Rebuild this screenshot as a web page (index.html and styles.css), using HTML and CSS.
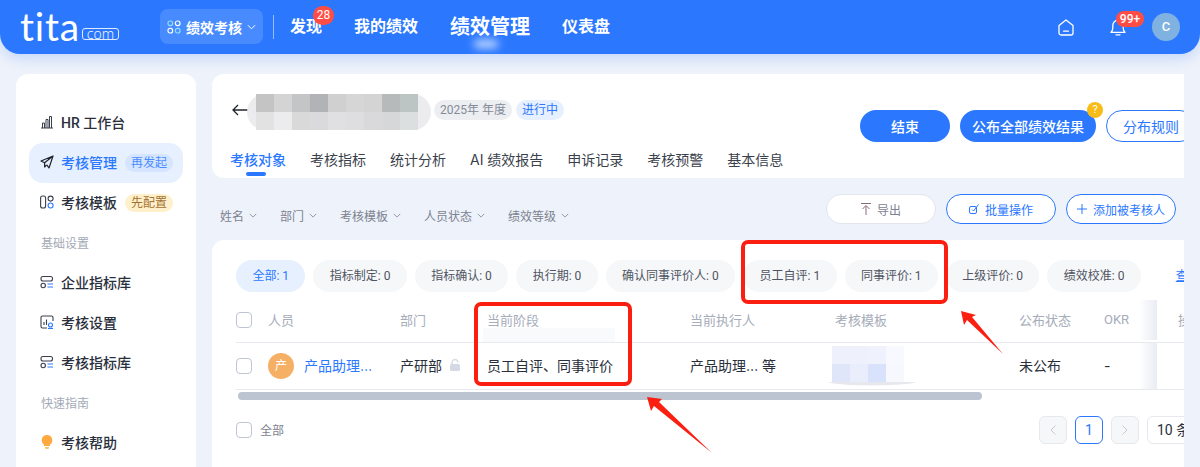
FILE: index.html
```html
<!DOCTYPE html>
<html lang="zh-CN">
<head>
<meta charset="utf-8">
<title>绩效考核</title>
<link rel="stylesheet" href="styles.css">
</head>
<body>
<div class="page">
  <header class="topbar">
    <div class="logo"><span class="logo-word">tita</span><span class="logo-com">com</span></div>
    <div class="app-switch">
      <svg class="app-icon" viewBox="0 0 14 14" width="14" height="14" fill="none" stroke-width="1.2"><rect x="1" y="1" width="4.6" height="4.6" rx="2" stroke="#8fe0ff"/><rect x="8.4" y="1" width="4.6" height="4.6" rx="2" stroke="#fff"/><rect x="1" y="8.4" width="4.6" height="4.6" rx="2" stroke="#fff"/><rect x="8.4" y="8.4" width="4.6" height="4.6" rx="2" stroke="#8fe0ff"/></svg>
      <span>绩效考核</span>
      <svg viewBox="0 0 10 6" width="9" height="6" fill="none" stroke="#fff" stroke-width="1.1"><path d="M1 1l4 4 4-4"/></svg>
    </div>
    <div class="top-divider"></div>
    <nav class="topnav">
      <a class="nav-item nav-find">发现<span class="badge-28">28</span></a>
      <a class="nav-item">我的绩效</a>
      <a class="nav-item nav-current">绩效管理</a>
      <a class="nav-item">仪表盘</a>
    </nav>
    <div class="top-right">
      <svg viewBox="0 0 16 17" width="16" height="17" fill="none" stroke="#fff" stroke-width="1.3"><path d="M1 6.6L8 1l7 5.6v7.4a2 2 0 0 1-2 2H3a2 2 0 0 1-2-2z" stroke-linejoin="round"/><path d="M5.6 12.2h4.8" stroke-linecap="round"/></svg>
      <div class="bell">
        <svg viewBox="0 0 16 18" width="16" height="18" fill="none" stroke="#fff" stroke-width="1.3"><path d="M1 14.4c1.4-1 1.8-2.4 1.8-4.6V7.4a5.2 5.2 0 0 1 10.4 0v2.4c0 2.2.4 3.600 1.800 4.600z" stroke-linejoin="round"/><path d="M6 16.800h4" stroke-linecap="round"/></svg>
        <span class="badge-99">99+</span>
      </div>
      <div class="user-avatar">C</div>
    </div>
  </header>

  <div class="content">
    <aside class="sidebar">
      <a class="side-item">
        <svg class="side-icon" viewBox="0 0 14 14" fill="none" stroke="#3a3f4c" stroke-width="1"><path d="M1 13h12M2.500 13V8h2v5M6 13V4.500h2V13M9.500 13V1.500h2V13"/></svg>
        <span>HR 工作台</span>
      </a>
      <a class="side-item side-active">
        <svg class="side-icon" viewBox="0 0 14 14" fill="none" stroke="#20242e" stroke-width="1.200" stroke-linejoin="round"><path d="M13 1L1 6l3.600 1.800L13 1 9 13 6.800 9.800"/><path d="M4.600 7.800v4.200l2-2.200"/></svg>
        <span>考核管理</span><em class="tag tag-blue">再发起</em>
      </a>
      <a class="side-item">
        <svg class="side-icon" viewBox="0 0 14 14" fill="none" stroke-width="1.100"><rect x=".6" y="1" width="5" height="12" rx="2" stroke="#3a3f4c"/><circle cx="10.600" cy="3.600" r="2.500" stroke="#3a3f4c"/><circle cx="10.600" cy="10.500" r="2.500" stroke="#2b78ff"/></svg>
        <span>考核模板</span><em class="tag tag-amber">先配置</em>
      </a>
      <div class="side-label">基础设置</div>
      <a class="side-item">
        <svg class="side-icon" viewBox="0 0 14 14" fill="none" stroke-width="1.100"><rect x="1" y="1.500" width="11.500" height="4.500" rx="2" stroke="#3a3f4c"/><circle cx="3.200" cy="10.500" r="2.200" stroke="#3a3f4c"/><path d="M7.500 9h5.500M7.500 12h5.500" stroke="#2b78ff"/></svg>
        <span>企业指标库</span>
      </a>
      <a class="side-item">
        <svg class="side-icon" viewBox="0 0 14 14" fill="none" stroke-width="1.100"><path d="M7 13H2.500a1.500 1.500 0 0 1-1.500-1.500v-9A1.500 1.500 0 0 1 2.500 1h9A1.500 1.500 0 0 1 13 2.500V6" stroke="#3a3f4c"/><path d="M4 10V7M6.500 10V4.500" stroke="#3a3f4c"/><circle cx="10.500" cy="10" r="2" stroke="#2b78ff"/><path d="M8 13.500h5" stroke="#2b78ff"/></svg>
        <span>考核设置</span>
      </a>
      <a class="side-item">
        <svg class="side-icon" viewBox="0 0 14 14" fill="none" stroke-width="1.100"><rect x="1" y="1.500" width="11.500" height="4.500" rx="2" stroke="#3a3f4c"/><circle cx="3.200" cy="10.500" r="2.200" stroke="#3a3f4c"/><path d="M7.500 9h5.500M7.500 12h5.500" stroke="#2b78ff"/></svg>
        <span>考核指标库</span>
      </a>
      <div class="side-label">快速指南</div>
      <a class="side-item">
        <svg class="side-icon" viewBox="0 0 14 14"><path d="M7 0a5.200 5.200 0 0 0-3 9.500V11h6V9.500A5.200 5.200 0 0 0 7 0z" fill="#ffa940"/><path d="M4.800 12h4.400l-.8 2H5.600z" fill="#ffc069"/></svg>
        <span>考核帮助</span>
      </a>
    </aside>

    <main class="main">
      <section class="head-card">
        <div class="head-row">
          <svg class="back" viewBox="0 0 16 12" width="16" height="12" fill="none" stroke="#20242e" stroke-width="1.300"><path d="M16 6H1M6 1L1 6l5 5"/></svg>
          <svg class="title-mosaic" viewBox="0 0 184 36" width="184" height="36">
            <rect width="184" height="36" rx="18" fill="#ececef"/>
            <rect x="9" width="18" height="18" fill="#c4c4c4"/><rect x="27" width="18" height="18" fill="#d4d4d4"/><rect x="45" width="18" height="18" fill="#c4c5c7"/><rect x="63" width="18" height="18" fill="#b2b3b6"/><rect x="81" width="18" height="18" fill="#d0d0d0"/><rect x="99" width="18" height="18" fill="#d6d6d6"/><rect x="117" width="18" height="18" fill="#d4d4d4"/><rect x="135" width="18" height="18" fill="#b7baba"/><rect x="153" width="18" height="18" fill="#bcc4c4"/>
            <rect x="9" y="18" width="18" height="18" fill="#e2e2e2"/><rect x="27" y="18" width="18" height="18" fill="#ececee"/><rect x="45" y="18" width="18" height="18" fill="#d9d9d9"/><rect x="63" y="18" width="18" height="18" fill="#dadadc"/><rect x="81" y="18" width="18" height="18" fill="#e0e0e2"/><rect x="99" y="18" width="18" height="18" fill="#dedee0"/><rect x="117" y="18" width="18" height="18" fill="#d9d9db"/><rect x="135" y="18" width="18" height="18" fill="#d6d7d9"/><rect x="153" y="18" width="18" height="18" fill="#dcdfdf"/>
          </svg>
          <span class="chip chip-grey">2025年 年度</span>
          <span class="chip chip-blue">进行中</span>
          <div class="head-actions">
            <button class="btn-solid btn-end">结束</button>
            <button class="btn-solid btn-publish">公布全部绩效结果<span class="help-dot">?</span></button>
            <button class="btn-ghost btn-rule">分布规则</button>
          </div>
        </div>
        <nav class="tabs">
          <a class="tab tab-active">考核对象</a>
          <a class="tab">考核指标</a>
          <a class="tab">统计分析</a>
          <a class="tab">AI 绩效报告</a>
          <a class="tab">申诉记录</a>
          <a class="tab">考核预警</a>
          <a class="tab">基本信息</a>
        </nav>
      </section>

      <section class="filter-bar">
        <div class="filters">
          <span class="filter">姓名<svg viewBox="0 0 10 6" width="8" height="5" fill="none" stroke="#7d8391"><path d="M1 1l4 4 4-4"/></svg></span>
          <span class="filter">部门<svg viewBox="0 0 10 6" width="8" height="5" fill="none" stroke="#7d8391"><path d="M1 1l4 4 4-4"/></svg></span>
          <span class="filter">考核模板<svg viewBox="0 0 10 6" width="8" height="5" fill="none" stroke="#7d8391"><path d="M1 1l4 4 4-4"/></svg></span>
          <span class="filter">人员状态<svg viewBox="0 0 10 6" width="8" height="5" fill="none" stroke="#7d8391"><path d="M1 1l4 4 4-4"/></svg></span>
          <span class="filter">绩效等级<svg viewBox="0 0 10 6" width="8" height="5" fill="none" stroke="#7d8391"><path d="M1 1l4 4 4-4"/></svg></span>
        </div>
        <div class="filter-actions">
          <button class="btn-line btn-export"><svg viewBox="0 0 10 12" width="10" height="12" fill="none" stroke="#8a6a78"><path d="M0 .5h10M5 12V3M1.500 6L5 2.500 8.500 6"/></svg>导出</button>
          <button class="btn-line btn-blue"><svg viewBox="0 0 10 10" width="10" height="10" fill="none" stroke="#2b78ff"><rect x=".5" y="2.500" width="7" height="7" rx="1.500"/><path d="M3 5.500l1.500 1.500L9.500.5"/></svg>批量操作</button>
          <button class="btn-line btn-blue"><svg viewBox="0 0 10 10" width="10" height="10" fill="none" stroke="#2b78ff"><path d="M5 0v10M0 5h10"/></svg>添加被考核人</button>
        </div>
      </section>

      <section class="table-card">
        <div class="pills">
          <span class="pill pill-active">全部: 1</span>
          <span class="pill">指标制定: 0</span>
          <span class="pill">指标确认: 0</span>
          <span class="pill">执行期: 0</span>
          <span class="pill">确认同事评价人: 0</span>
          <span class="pill">员工自评: 1</span>
          <span class="pill">同事评价: 1</span>
          <span class="pill">上级评价: 0</span>
          <span class="pill">绩效校准: 0</span>
          <a class="pill-link">查看</a>
        </div>
        <div class="grid-row grid-head">
          <span class="check"></span>
          <span>人员</span><span>部门</span><span>当前阶段</span><span>当前执行人</span><span>考核模板</span><span>公布状态</span><span>OKR</span>
          <span class="fixed-col">操作</span>
        </div>
        <div class="grid-row grid-body">
          <span class="check"></span>
          <span class="person"><i class="avatar">产</i><a class="person-name">产品助理…</a></span>
          <span class="dept">产研部<svg viewBox="0 0 12 12" width="12" height="12"><path d="M3 5.500V3.500a3 3 0 0 1 6 0" fill="none" stroke="#d4d9e4" stroke-width="1.300"/><rect x="1" y="5" width="10" height="7" rx="1.500" fill="#d4d9e4"/></svg></span>
          <span>员工自评、同事评价</span>
          <span>产品助理… 等</span>
          <span class="tmpl-cell"><svg viewBox="0 0 90 46" width="90" height="46">
            <rect x="4" y="3" width="72" height="36" fill="#f8f9fe"/>
            <rect x="4" y="3" width="18" height="18" fill="#eef1fc"/><rect x="22" y="3" width="18" height="18" fill="#eef1fc"/><rect x="40" y="3" width="18" height="18" fill="#eff2fd"/><rect x="58" y="3" width="18" height="18" fill="#f7f9fe"/>
            <rect x="4" y="21" width="18" height="18" fill="#e0e6fa"/><rect x="22" y="21" width="18" height="18" fill="#eaeefc"/><rect x="40" y="21" width="18" height="18" fill="#d8e2fa"/><rect x="58" y="21" width="18" height="18" fill="#f6f8fe"/>
            <path d="M0 39h88c-6 4-78 5-88 0z" fill="#e6e8ee"/>
          </svg></span>
          <span>未公布</span>
          <span>-</span>
          <span class="fixed-col"></span>
        </div>
        <div class="scrollbar"></div>
        <div class="table-foot">
          <span class="check"></span>
          <span class="foot-all">全部</span>
          <div class="pager">
            <span class="page-btn page-off"><svg viewBox="0 0 6 10" width="6" height="10" fill="none" stroke="#c5cad4"><path d="M5.500.5L1 5l4.500 4.500"/></svg></span>
            <span class="page-btn page-on">1</span>
            <span class="page-btn page-off"><svg viewBox="0 0 6 10" width="6" height="10" fill="none" stroke="#c5cad4"><path d="M.5.500L5 5 .5 9.500"/></svg></span>
            <span class="page-size">10 条/页</span>
          </div>
        </div>
      </section>
    </main>
  </div>

  <svg class="marks" viewBox="0 0 1200 467" width="1200" height="467" fill="none">
    <rect x="483" y="328" width="132" height="14" fill="#f4f5f8" opacity=".5"/>
    <rect x="476" y="304" width="154" height="80" rx="5" stroke="#fb1f12" stroke-width="4"/>
    <rect x="743" y="242" width="203" height="60" rx="5" stroke="#fb1f12" stroke-width="4"/>
    <path d="M961 311L976 315L972 317L1003 354L967 320L964 325Z" fill="#fb1f12"/>
    <path d="M647 397L662 399L659 402L712 453L654 406L651 411Z" fill="#fb1f12"/>
  </svg>
</div>
</body>
</html>
```
FILE: styles.css
```css
* { box-sizing: border-box; }
html, body { margin: 0; height: 100%; }
body {
  font-family: Roboto, "Noto Sans CJK SC", sans-serif;
  color: #2a2f3c;
  background: #eef2fa;
  overflow: hidden;
}
a { text-decoration: none; color: inherit; }
em, i { font-style: normal; }
button { font-family: inherit; cursor: pointer; }
svg { flex: none; display: block; }

.page { position: relative; height: 100vh; display: flex; flex-direction: column; overflow: hidden; }

/* top bar */
.topbar {
  height: 54px;
  flex: none;
  display: flex;
  align-items: center;
  background: #2b78ff;
  border-radius: 0 0 20px 20px;
  box-shadow: 0 4px 14px rgba(43, 120, 255, .22);
  color: #fff;
  padding-left: 20px;
}
.logo { width: 140px; display: flex; align-items: flex-end; height: 30px; }
.logo-word { font-family: Lato, sans-serif; font-size: 39px; line-height: 30px; letter-spacing: .8px; font-weight: 400; height: 30px; position: relative; top: -1px; }
.logo-com { font-family: "Open Sans", sans-serif; font-size: 14px; font-weight: 300; line-height: 9px; height: 12px; width: 37px; text-align: center; border: 1px solid rgba(255,255,255,.85); border-radius: 3px; margin: 0 0 2px 2px; }
.app-switch {
  width: 103px; height: 35px; margin-top: -1px;
  display: flex; align-items: center; gap: 5px; padding-left: 7px;
  font-size: 14px; font-weight: 700;
  background: rgba(255,255,255,.14);
  border-radius: 8px;
}
.top-divider { width: 1px; height: 24px; margin: 0 16px 0 10px; background: rgba(255,255,255,.5); }
.topnav { display: flex; align-items: center; gap: 32px; height: 54px; }
.nav-item { font-size: 16px; font-weight: 700; line-height: 24px; position: relative; }
.nav-current { font-size: 20px; }
.nav-current::after { content: ""; position: absolute; left: 24px; bottom: -9px; width: 24px; height: 8px; background: rgba(255,255,255,.75); filter: blur(4px); border-radius: 4px; }
.badge-28 {
  position: absolute; left: 23px; top: -9px;
  width: 21px; height: 19px; border-radius: 10px;
  background: #ff4d45; font-size: 12px; line-height: 19px; text-align: center; font-weight: 400;
}
.top-right { margin-left: auto; display: flex; align-items: center; padding-right: 20px; }
.bell { position: relative; margin-left: 36px; margin-right: 26px; width: 16px; }
.badge-99 {
  position: absolute; left: 6px; top: -7px;
  width: 28px; height: 16px; border-radius: 8px;
  background: #ff4d45; font-size: 12px; line-height: 16px; text-align: center; font-weight: 500;
}
.user-avatar { width: 28px; height: 28px; border-radius: 50%; background: #7fb2e0; font-size: 13px; font-weight: 500; line-height: 28px; text-align: center; }

/* layout */
.content { flex: 1; min-height: 0; display: flex; gap: 16px; padding: 20px 16px 0; }

/* sidebar */
.sidebar { width: 180px; flex: none; background: #fff; border-radius: 12px 12px 0 0; padding: 29px 13px 0; }
.side-item { height: 40px; display: flex; align-items: center; padding: 0 0 2px 11px; font-size: 14px; font-weight: 500; color: #2a2f3c; border-radius: 14px; }
.side-icon { width: 14px; height: 14px; margin-right: 7px; }
.side-active { background: #e7f0ff; color: #2b78ff; }
.side-label { height: 40px; line-height: 42px; padding-left: 12px; font-size: 12px; color: #a3a9b6; }
.tag { margin: 2px 0 0 8px; width: 48px; height: 18px; border-radius: 9px; font-size: 12px; line-height: 18px; text-align: center; font-weight: 400; }
.tag-blue { background: #d6e5ff; color: #4a8cff; }
.tag-amber { background: #fff0cc; color: #a57231; }

/* main */
.main { flex: 1; min-width: 0; display: flex; flex-direction: column; overflow: hidden; }
.head-card { height: 104px; flex: none; background: #fff; border-radius: 12px 0 0 12px; padding: 20px 0 0 19px; overflow: hidden; }
.head-row { display: flex; align-items: flex-start; height: 48px; }
.back { margin: 10px 0 0 1px; }
.title-mosaic { margin-left: -1px; }
.chip { height: 20px; line-height: 20px; margin-top: 6px; border-radius: 10px; font-size: 12px; text-align: center; }
.chip-grey { width: 78px; margin-left: 3px; background: #eceef2; color: #858b98; }
.chip-blue { width: 48px; margin-left: 4px; background: #e7f0ff; color: #2b78ff; }
.head-actions { margin-left: auto; margin-right: -12px; margin-top: 16px; display: flex; gap: 10px; flex: none; }
.btn-solid, .btn-ghost { height: 32px; border-radius: 16px; font-size: 14px; font-weight: 500; padding: 0; position: relative; }
.btn-solid { background: #2b78ff; color: #fff; border: 0; }
.btn-end { width: 90px; }
.btn-publish { width: 136px; }
.btn-ghost { width: 90px; background: #fff; border: 1px solid #2b78ff; color: #2b78ff; font-weight: 400; }
.help-dot { position: absolute; right: -7px; top: -8px; width: 16px; height: 16px; border-radius: 50%; background: #f9bc15; color: #fff; font-size: 11px; line-height: 16px; font-weight: 400; }
.tabs { display: flex; gap: 24px; margin: 7px 0 0 -1px; font-family: Inter, "Noto Sans CJK SC", sans-serif; }
.tab { position: relative; font-size: 14px; line-height: 22px; color: #3a3f4c; }
.tab-active { color: #2b78ff; font-weight: 500; }
.tab-active::after { content: ""; position: absolute; left: 16px; top: 23px; width: 20px; height: 4px; border-radius: 2px; background: #2b78ff; }

.filter-bar { height: 62px; flex: none; display: flex; align-items: center; justify-content: space-between; padding: 0 8px; }
.filters { display: flex; gap: 23px; padding-top: 12px; }
.filter { display: flex; align-items: center; gap: 5px; font-size: 12px; color: #7d8391; }
.filter-actions { display: flex; gap: 10px; }
.btn-line { width: 110px; height: 30px; border-radius: 15px; font-size: 12px; display: flex; align-items: center; justify-content: center; gap: 6px; background: #fff; padding: 0; }
.btn-export { border: 1px solid #e2e5ec; color: #7d8391; }
.btn-blue { border: 1px solid #2b78ff; color: #2b78ff; }

.table-card { flex: 1; min-height: 0; background: #fff; border-radius: 12px 0 0 0; padding: 20px 0 0 24px; overflow: hidden; }
.pills { display: flex; gap: 8px; height: 32px; margin-bottom: 8px; white-space: nowrap; }
.pill { height: 32px; line-height: 32px; padding: 0 16.4px; border-radius: 16px; background: #f6f7f9; font-size: 12px; color: #4e5462; }
.pill-active { background: #e7f0ff; color: #2b78ff; }
.pill-link { margin-left: 27px; font-size: 12px; line-height: 32px; color: #2b78ff; text-decoration: underline; }

.grid-row { display: grid; grid-template-columns: 32px 132px 87px 203px 145px 184px 85px 53px 60px; align-items: center; border-bottom: 1px solid #e8eaef; white-space: nowrap; }
.grid-head { height: 43px; font-size: 13px; color: #a6acba; padding-bottom: 2px; }
.grid-head > span:not(.check) { padding-bottom: 2px; }
.grid-body { height: 47px; font-family: Inter, "Noto Sans CJK SC", sans-serif; font-size: 14px; color: #2a2f3c; }
.grid-body > span:not(.check):not(.person):not(.tmpl-cell) { padding-bottom: 2px; }
.check { display: block; width: 16px; height: 16px; border: 1px solid #bfc5d2; border-radius: 4px; background: #fff; }
.person { display: flex; align-items: center; gap: 10px; }
.avatar { width: 26px; height: 26px; border-radius: 50%; background: #f5b065; color: #fff; font-size: 12px; line-height: 26px; text-align: center; }
.person-name { color: #2b78ff; padding-bottom: 2px; }
.dept { display: flex; align-items: center; gap: 7px; }
.tmpl-cell { height: 46px; margin-left: -7px; }
.fixed-col { position: relative; align-self: stretch; display: flex; align-items: center; padding-left: 21px; background: #fff; }
.fixed-col::before { content: ""; position: absolute; left: -18px; top: 0; bottom: 0; width: 18px; background: linear-gradient(90deg, rgba(120, 135, 180, 0), rgba(120, 135, 180, .16)); }

.scrollbar { width: 744px; height: 8px; margin: 2px 0 0 2px; border-radius: 4px; background: #bcc4d2; }
.table-foot { display: flex; align-items: center; height: 28px; margin-top: 16px; }
.foot-all { margin-left: 8px; padding-bottom: 2px; font-size: 12px; color: #7d8391; }
.pager { margin-left: auto; margin-right: -43px; display: flex; gap: 8px; flex: none; }
.page-btn { width: 28px; height: 28px; border-radius: 6px; display: flex; align-items: center; justify-content: center; font-size: 14px; }
.page-off { background: #f6f7f9; border: 1px solid #e6e8ed; }
.page-on { border: 1px solid #2b78ff; color: #2b78ff; }
.page-size { width: 80px; height: 28px; border: 1px solid #e6e8ed; border-radius: 6px; font-size: 14px; line-height: 26px; padding-left: 9px; white-space: nowrap; }

.marks { position: absolute; left: 0; top: 0; pointer-events: none; }
```
